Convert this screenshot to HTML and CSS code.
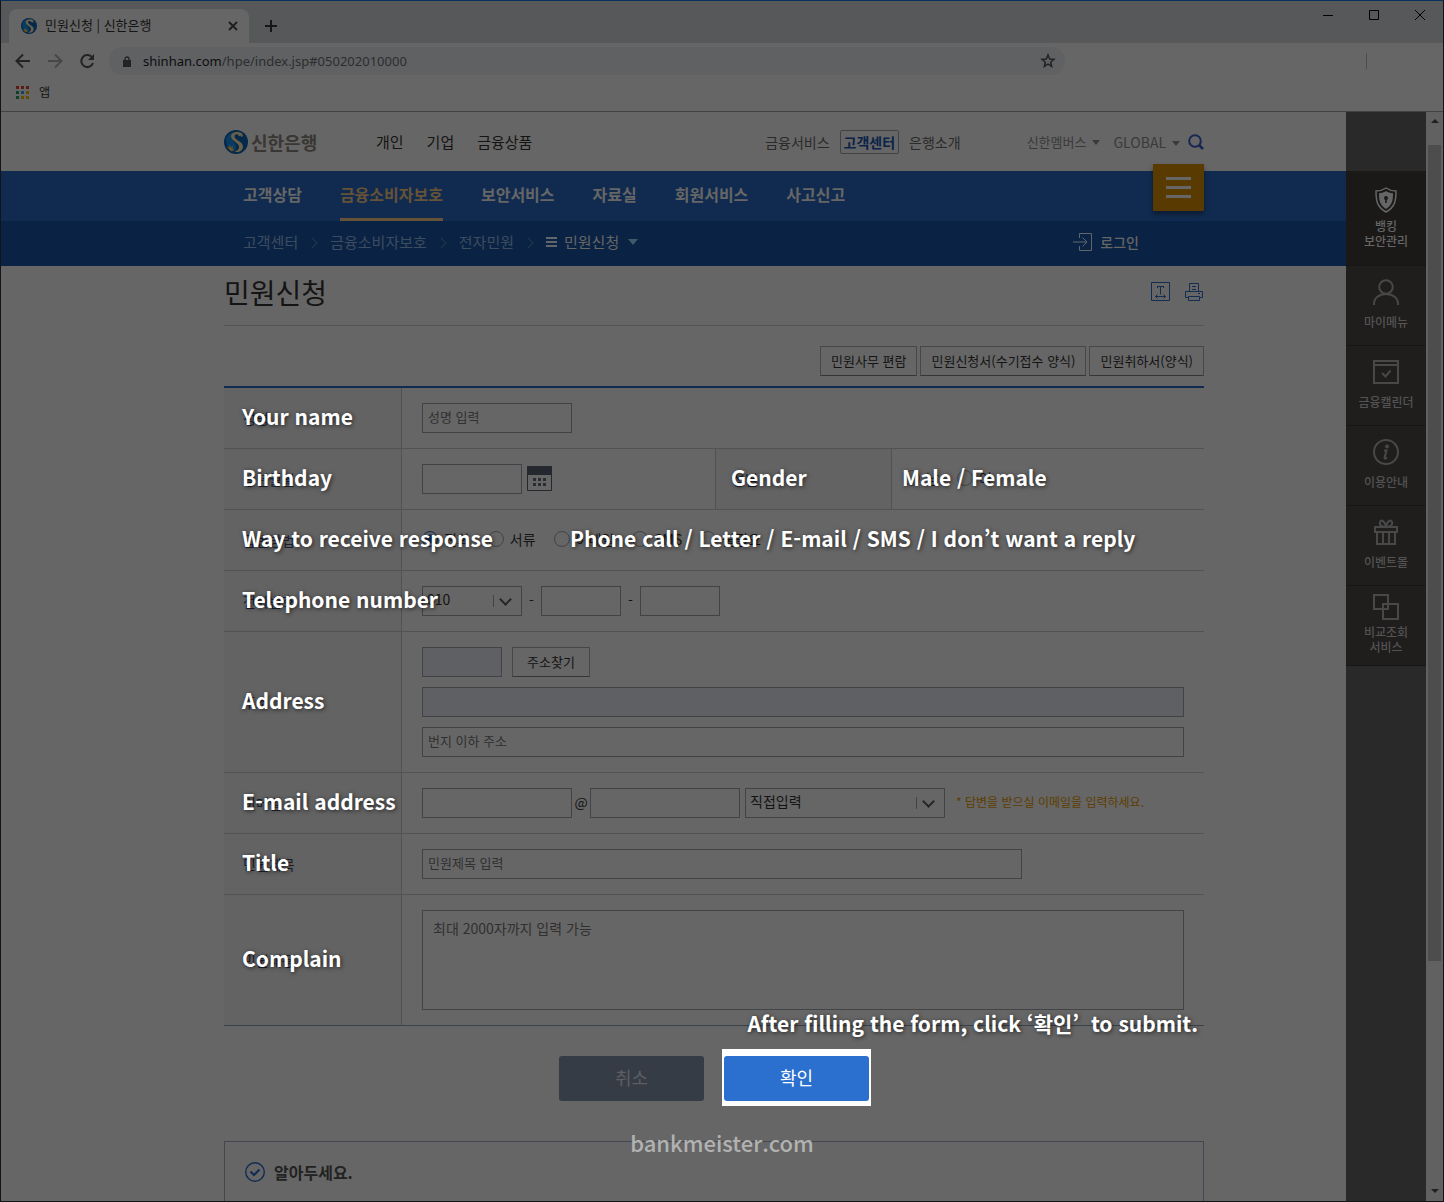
FILE: index.html
```html
<!DOCTYPE html>
<html lang="ko">
<head>
<meta charset="utf-8">
<title>민원신청 | 신한은행</title>
<meta name="viewport" content="width=device-width, initial-scale=1">
<link rel="stylesheet" href="styles.css">
</head>
<body>
<svg class="defs" aria-hidden="true">
  <symbol id="logo" viewBox="0 0 24 24">
    <circle cx="12" cy="12" r="12" fill="#05294a"/>
    <path d="M2 9a10 10 0 0 1 8-7c-3 3-4 6-1 9 3 3 4 6 2 10-5-1-9-5-9-12z" fill="#083c63"/>
    <path d="M18 3.500c-1-1-3-1.500-5-1.500-3.500 0-6 2-6 4.500C7 11 15 12.500 15 17c0 2.500-2 4-5 4.500 4.500 1.500 9-.5 9-5 0-5-8.500-6.500-8.500-10 0-1.800 2-2.500 3.500-2l1 2 1.500-1 1 1.500 1.500-1z" fill="#67604a"/>
    <path d="M3 16l2 1.500.5-2.500L7 17.500 9 16l-.5 3 2 .5L8 21.500C6 21 4 18.500 3 16z" fill="#6a5221"/>
  </symbol>
</svg>
<div class="window">
  <header class="chrome">
    <div class="tabs">
      <div class="tab">
        <svg class="favicon" width="16" height="16"><use href="#logo"/></svg>
        <span class="tab-title">민원신청 | 신한은행</span>
        <button class="icon-btn" aria-label="Close tab"><svg width="10" height="10" viewBox="0 0 10 10"><path d="M1 1l8 8M9 1l-8 8" stroke="#1c1d1e" stroke-width="1.800"/></svg></button>
      </div>
      <button class="icon-btn new-tab" aria-label="New tab"><svg width="12" height="12" viewBox="0 0 12 12"><path d="M6 0v12M0 6h12" stroke="#161718" stroke-width="2"/></svg></button>
      <div class="win-controls">
        <button class="icon-btn" aria-label="Minimize"><svg width="10" height="10"><path d="M0 5.5h10" stroke="#000"/></svg></button>
        <button class="icon-btn" aria-label="Maximize"><svg width="10" height="10"><path d="M.5.5h9v9h-9z" fill="none" stroke="#000"/></svg></button>
        <button class="icon-btn" aria-label="Close"><svg width="10" height="10"><path d="M0 0l10 10M10 0L0 10" stroke="#000"/></svg></button>
      </div>
    </div>
    <div class="toolbar">
      <button class="icon-btn" aria-label="Back"><svg width="16" height="16" viewBox="0 0 16 16"><path d="M15 8H2M8 1.500L1.500 8 8 14.500" fill="none" stroke="#222325" stroke-width="2"/></svg></button>
      <button class="icon-btn" aria-label="Forward"><svg width="16" height="16" viewBox="0 0 16 16"><path d="M1 8h13M8 1.500L14.500 8 8 14.500" fill="none" stroke="#464749" stroke-width="2"/></svg></button>
      <button class="icon-btn" aria-label="Reload"><svg width="16" height="16" viewBox="0 0 16 16"><path d="M14 10a6 6 0 1 1-1.500-6.200" fill="none" stroke="#222325" stroke-width="2"/><path d="M15 1v6H9z" fill="#222325"/></svg></button>
      <div class="omnibox">
        <svg width="8" height="11" viewBox="0 0 8 11"><path d="M0 4h8v7H0z" fill="#222325"/><path d="M2 5V3a2 2 0 0 1 4 0v2" fill="none" stroke="#222325" stroke-width="1.300"/></svg>
        <span class="url"><b>shinhan.com</b>/hpe/index.jsp#050202010000</span>
        <svg width="16" height="16" viewBox="0 0 16 16"><path d="M8 2l1.700 4 4.300.4-3.300 2.800 1 4.300L8 11.200l-3.700 2.300 1-4.300L2 6.400 6.300 6z" fill="none" stroke="#222325" stroke-width="1.500"/></svg>
      </div>
      <span class="tool-divider"></span>
    </div>
    <div class="bookmarks">
      <svg width="13" height="13" viewBox="0 0 13 13"><path d="M0 0h3v3H0zM5 0h3v3H5zM10 0h3v3h-3z" fill="#5e1b16"/><path d="M0 5h3v3H0zM0 10h3v3H0z" fill="#0c4225"/><path d="M5 5h3v3H5z" fill="#1b3f6b"/><path d="M10 5h3v3h-3zM5 10h3v3H5zM10 10h3v3h-3z" fill="#644b02"/></svg>
      <a href="#apps">앱</a>
    </div>
  </header>

  <div class="viewport">
    <main class="page">
      <div class="band top">
        <div class="inner">
          <a class="brand" href="#home"><svg width="24" height="24"><use href="#logo"/></svg>신한은행</a>
          <nav class="main-links"><a href="#personal">개인</a><a href="#corp">기업</a><a href="#products">금융상품</a></nav>
          <nav class="sub-links"><a href="#service">금융서비스</a><a class="boxed" href="#center">고객센터</a><a href="#about">은행소개</a></nav>
          <div class="util">
            <a href="#members">신한멤버스<i class="caret"></i></a>
            <a class="global" href="#global">GLOBAL<i class="caret"></i></a>
            <button class="icon-btn" aria-label="검색"><svg width="16" height="16" viewBox="0 0 16 16"><circle cx="7" cy="7" r="5.800" fill="none" stroke="#182653" stroke-width="2"/><path d="M11 11l4 4" stroke="#182653" stroke-width="2.500"/></svg></button>
          </div>
        </div>
      </div>
      <div class="band gnb">
        <div class="inner">
          <a href="#1">고객상담</a><a class="on" href="#2">금융소비자보호</a><a href="#3">보안서비스</a><a href="#4">자료실</a><a href="#5">회원서비스</a><a href="#6">사고신고</a>
          <button class="menu-all" aria-label="전체메뉴"><span></span><span></span><span></span></button>
        </div>
      </div>
      <div class="band crumbs">
        <div class="inner">
          <a href="#c1">고객센터</a><i class="sep"></i><a href="#c2">금융소비자보호</a><i class="sep"></i><a href="#c3">전자민원</a><i class="sep"></i>
          <a class="here" href="#c4"><svg width="11" height="10" viewBox="0 0 11 10"><path d="M0 1h11M0 5h11M0 9h11" stroke="#61666b" stroke-width="2"/></svg>민원신청<i class="caret"></i></a>
          <a class="login" href="#login"><svg width="20" height="18" viewBox="0 0 20 18"><path d="M6.500 5V.500h12v17h-12V13M0 9h14M9.500 4.500L14 9l-4.500 4.500" fill="none" stroke="#61666b"/></svg>로그인</a>
        </div>
      </div>

      <div class="band">
        <form class="inner body">
          <div class="title-row">
            <h1>민원신청</h1>
            <button type="button" class="icon-btn" aria-label="글자 크기"><svg width="19" height="19" viewBox="0 0 19 19"><path d="M.500.500h18v18H.500zM6 4.500h7M9.500 4.500v8M6.500 4v2M12.500 4v2M4.500 14.500h10M6.500 12.500l-2 2 2 2M12.500 12.500l2 2-2 2" fill="none" stroke="#122c52"/></svg></button>
            <button type="button" class="icon-btn" aria-label="인쇄"><svg width="18" height="18" viewBox="0 0 18 18"><path d="M4.500 8.500v-8h9v8M3.500 14.500h-3v-6h17v6h-3M3.500 13.500h11v4h-11zM7 3.500h4M7 6.500h4M13 10.500h2" fill="none" stroke="#122c52"/></svg></button>
          </div>
          <div class="downloads">
            <button type="button" class="btn">민원사무 편람</button><button type="button" class="btn">민원신청서(수기접수 양식)</button><button type="button" class="btn">민원취하서(양식)</button>
          </div>

          <table class="form">
            <colgroup><col class="c1"><col class="c2"><col class="c3"><col></colgroup>
            <tr>
              <th scope="row"><label for="name">성명</label><span class="note">Your name</span></th>
              <td colspan="3"><input class="w150" id="name" placeholder="성명 입력"></td>
            </tr>
            <tr>
              <th scope="row"><label for="birth">생년월일</label><span class="note">Birthday</span></th>
              <td><div class="line"><input class="w100" id="birth"><button type="button" class="icon-btn cal" aria-label="달력"><svg width="25" height="25" viewBox="0 0 25 25"><path d="M.500.500h24v24H.500z" fill="#666" stroke="#25292f"/><path d="M0 0h25v9H0z" fill="#25292f"/><path d="M6 12h3v3H6zM11 12h3v3h-3zM16 12h3v3h-3zM6 17h3v3H6zM11 17h3v3h-3zM16 17h3v3h-3z" fill="#292d33"/></svg></button></div></td>
              <th scope="row" class="mid">성별<span class="note near">Gender</span></th>
              <td class="tight"><div class="line radios"><label><input type="radio" name="sex">남</label><label><input type="radio" name="sex">여</label></div><span class="note near">Male / Female</span></td>
            </tr>
            <tr>
              <th scope="row">답변방법<span class="note">Way to receive response</span></th>
              <td colspan="3"><div class="line radios"><label><input type="radio" name="reply" checked>전화</label><label><input type="radio" name="reply">서류</label><label><input type="radio" name="reply">이메일</label><label><input type="radio" name="reply">SMS</label><label><input type="radio" name="reply">불필요</label></div><span class="note options">Phone call / Letter / E-mail / SMS / I don’t want a reply</span></td>
            </tr>
            <tr>
              <th scope="row"><label for="tel">전화번호</label><span class="note">Telephone number</span></th>
              <td colspan="3"><div class="line phone"><span class="select w100"><select id="tel"><option>010</option></select></span><span class="dash">-</span><input class="w80" aria-label="전화번호 중간"><span class="dash">-</span><input class="w80" aria-label="전화번호 끝"></div></td>
            </tr>
            <tr>
              <th scope="row"><label for="addr">주소</label><span class="note">Address</span></th>
              <td colspan="3"><div class="stack">
                <div class="line zip"><input class="w80" aria-label="우편번호" readonly><button type="button" class="btn find">주소찾기</button></div>
                <input aria-label="기본 주소" readonly>
                <input id="addr" placeholder="번지 이하 주소">
              </div></td>
            </tr>
            <tr>
              <th scope="row"><label for="mail">이메일</label><span class="note">E-mail address</span></th>
              <td colspan="3"><div class="line mail"><input class="w150" id="mail"><span class="at">@</span><input class="w150" aria-label="이메일 도메인"><span class="select w200"><select aria-label="도메인 선택"><option>직접입력</option></select></span><span class="hint">* 답변을 받으실 이메일을 입력하세요.</span></div></td>
            </tr>
            <tr>
              <th scope="row"><label for="subject">민원제목</label><span class="note">Title</span></th>
              <td colspan="3"><input class="w600" id="subject" placeholder="민원제목 입력"></td>
            </tr>
            <tr>
              <th scope="row"><label for="content">민원내용</label><span class="note">Complain</span></th>
              <td colspan="3"><textarea id="content" placeholder="최대 2000자까지 입력 가능"></textarea></td>
            </tr>
          </table>

          <div class="actions">
            <button type="button" class="cta">취소</button>
            <div class="spot"><button type="submit" class="cta ok">확인</button></div>
            <span class="note submit-note">After filling the form, click ‘확인’&nbsp; to submit.</span>
          </div>

          <section class="info">
            <h2><svg width="20" height="20" viewBox="0 0 20 20"><circle cx="10" cy="10" r="9.300" fill="none" stroke="#122c52" stroke-width="1.400"/><path d="M5.500 9.500l3.500 3.500 5.500-5.500" fill="none" stroke="#122c52" stroke-width="2.200"/></svg>알아두세요.</h2>
            <span class="watermark">bankmeister.com</span>
          </section>
        </form>
      </div>
    </main>

    <aside class="rail">
      <a class="first" href="#r1"><svg width="24" height="26" viewBox="0 0 24 26"><path d="M12 1c3 2 6 3 10 3 0 10-1 16-10 21C3 20 2 14 2 4c4 0 7-1 10-3z" fill="none" stroke="#666" stroke-width="1.500"/><path d="M12 4c2 1.500 4 2 7 2.300 0 8-1 11.700-7 15.700-6-4-7-7.700-7-15.700C8 6 10 5.500 12 4z" fill="#666" stroke="none"/><circle cx="12" cy="11" r="2" fill="#1a1918" stroke="none"/><path d="M11.200 12h1.600v4h-1.600z" fill="#1a1918" stroke="none"/></svg>뱅킹<br>보안관리</a>
      <a href="#r2"><svg width="26" height="26" viewBox="0 0 26 26"><circle cx="13" cy="8" r="6.800"/><path d="M1 26v-1c0-6 5-10 12-10s12 4 12 10v1"/></svg>마이메뉴</a>
      <a href="#r3"><svg width="26" height="26" viewBox="0 0 26 26"><path d="M1 2h24v22H1zM1 6h24M9 14l3.500 3.500 5-6"/></svg>금융캘린더</a>
      <a href="#r4"><svg width="26" height="26" viewBox="0 0 26 26"><circle cx="13" cy="13" r="12"/><circle cx="14" cy="7.500" r="1"/><path d="M11 11.500h2.500L11.500 19c0 1 1.500.5 2.500-.5"/></svg>이용안내</a>
      <a href="#r5"><svg width="26" height="26" viewBox="0 0 26 26"><path d="M2 8h22v5H2zM4 13v12h18V13M10 13v12M16 13v12M13 8C9 8 6 6 7 3s5-1 6 5c1-6 5-8 6-5s-2 5-6 5z"/></svg>이벤트몰</a>
      <a class="two" href="#r6"><svg width="26" height="26" viewBox="0 0 26 26"><path d="M1 1h14v14H1zM10 10h15v15H10z"/></svg>비교조회<br>서비스</a>
    </aside>
    <div class="scrollbar"><i class="up"></i><span class="thumb"></span><i class="down"></i></div>
  </div>
</div>
</body>
</html>
```
FILE: styles.css
```css
:root {
  --paper: #666;
  --ink: #141414;
  --blue: #112b50;
  --edge: #414346;
  --rule: #515253;
}

* { box-sizing: border-box; }

body {
  margin: 0;
  background: var(--paper);
  color: var(--ink);
  font: 14px/20px "Noto Sans CJK KR", "Noto Sans", sans-serif;
}

a { color: inherit; text-decoration: none; }
button, input, select, textarea { font: inherit; color: inherit; margin: 0; }
.defs { position: absolute; width: 0; height: 0; }
svg { display: block; flex: none; }

.icon-btn {
  display: flex;
  padding: 0;
  border: 0;
  background: none;
}

.window {
  display: flex;
  flex-direction: column;
  height: 100vh;
  border: 1px solid #121416;
  border-top-color: #07305a;
  overflow: hidden;
}

/* browser frame */
.chrome { flex: none; border-bottom: 1px solid #424345; }

.tabs {
  display: flex;
  height: 42px;
  padding: 8px 0 0 8px;
  background: #56585a;
}

.tab {
  display: flex;
  align-items: center;
  width: 240px;
  padding: 0 11px 0 12px;
  border-radius: 8px 8px 0 0;
  background: var(--paper);
  font-size: 13px;
}
.tab-title { flex: 1; margin-left: 8px; padding-bottom: 2px; }
.new-tab { align-items: center; margin-left: 16px; }

.win-controls { display: flex; gap: 36px; margin-left: auto; padding: 1px 18px; }

.toolbar {
  display: flex;
  align-items: center;
  gap: 16px;
  height: 36px;
  padding: 0 14px;
}

.omnibox {
  display: flex;
  align-items: center;
  flex: 0 1 956px;
  height: 28px;
  margin-left: -2px;
  padding: 0 9px 0 14px;
  border-radius: 14px;
  background: #606163;
  color: #2c2d2f;
  font-family: "Noto Sans", sans-serif;
}
.url { flex: 1; margin-left: 12px; font-size: 13px; }
.url b { color: #0d0e0f; font-weight: 400; }
.tool-divider { width: 1px; height: 16px; margin: 0 62px 0 auto; background: #4b4d50; }

.bookmarks {
  display: flex;
  align-items: center;
  gap: 10px;
  height: 32px;
  padding: 0 15px 6px;
  font-size: 12px;
}

.viewport { display: flex; flex: 1; min-height: 0; }
.page { flex: 1; min-width: 0; overflow: hidden; }

/* the left padding balances the quick rail on the right */
.band { padding-left: 81px; }
.inner { position: relative; max-width: 980px; margin: 0 auto; }

.top .inner { display: flex; align-items: center; height: 59px; }
.brand {
  display: flex;
  align-items: center;
  gap: 3px;
  width: 152px;
  color: #393634;
  font-size: 18px;
  font-weight: 700;
}
.main-links { display: flex; gap: 23px; font-size: 15px; }
.sub-links { display: flex; align-items: center; gap: 10px; margin-left: auto; color: #2a2a2a; }
.boxed {
  padding: 1px 3px;
  border: 1px solid var(--edge);
  border-radius: 2px;
  color: #0b2348;
  font-weight: 700;
}
.util {
  display: flex;
  align-items: center;
  gap: 13px;
  margin-left: 66px;
  color: #3a3a3a;
  font-size: 13px;
}
.global { font-size: 14px; }
.util .icon-btn { margin-left: -5px; }
.caret {
  display: inline-block;
  margin-left: 6px;
  border: 4px solid transparent;
  border-top: 5px solid currentColor;
  border-bottom: 0;
  vertical-align: 2px;
}

.gnb { background: var(--blue); color: #666; }
.gnb .inner {
  display: flex;
  gap: 38px;
  height: 50px;
  padding-left: 19px;
  font-size: 16px;
  font-weight: 700;
  line-height: 47px;
}
.gnb .on { color: #665237; border-bottom: 3px solid #665237; }
.menu-all {
  position: absolute;
  right: 0;
  top: -7px;
  display: flex;
  flex-direction: column;
  align-items: center;
  justify-content: center;
  gap: 6px;
  width: 51px;
  height: 47px;
  border: 0;
  background: #593a00;
  box-shadow: 0 3px 5px #0006;
}
.menu-all span { width: 25px; height: 3px; background: #666; }

.crumbs { background: #0a2344; color: #3d4c60; }
.crumbs .inner { display: flex; align-items: center; height: 45px; padding: 0 0 3px 19px; font-size: 15px; }
.sep {
  width: 8px;
  height: 8px;
  margin: 2px 14px 0 10px;
  border: solid #24364f;
  border-width: 1px 1px 0 0;
  transform: rotate(45deg);
}
.here, .login { display: flex; align-items: center; color: #666; }
.here svg { margin-right: 7px; }
.here .caret { border-width: 6px 5px 0; border-top-color: #3f5a6a; margin-left: 9px; }
.login { gap: 7px; margin: 0 65px 0 auto; font-size: 14px; font-weight: 500; }

.title-row {
  display: flex;
  align-items: center;
  gap: 15px;
  height: 60px;
  padding: 0 1px 8px 0;
  border-bottom: 1px solid #545454;
}
h1 { flex: 1; margin: 0; font-size: 28px; font-weight: 400; line-height: 40px; }

.downloads { display: flex; justify-content: flex-end; gap: 3px; padding: 20px 0 10px; }
.btn {
  height: 30px;
  padding: 0 10px;
  border: 1px solid #464749;
  border-bottom-color: #333538;
  border-radius: 1px;
  background: none;
  font-size: 13px;
  line-height: 26px;
  white-space: nowrap;
}

/* complaint form */
.form { width: 100%; border-collapse: separate; border-spacing: 0; border-top: 2px solid var(--blue); border-bottom: 1px solid #3b414a; table-layout: fixed; }
.c1 { width: 178px; }
.c2 { width: 313px; }
.c3 { width: 177px; }
.form th, .form td { position: relative; height: 61px; padding: 15px 20px; border-bottom: 1px solid var(--rule); text-align: left; }
.form th { padding: 0 19px; border-right: 1px solid var(--rule); background: #636364; color: #1a2030; font-weight: 400; }
.form tr:last-child > * { border-bottom: 0; }
.form .mid { padding-left: 16px; border-left: 1px solid var(--rule); }
.form .tight { padding-left: 12px; }

input, textarea {
  display: block;
  width: 100%;
  height: 30px;
  padding: 0 5px 4px;
  border: 1px solid var(--edge);
  border-radius: 0;
  background: none;
}
input, textarea, select, .btn { outline: 0; }
::placeholder { color: #303030; opacity: 1; }
input { font-size: 13px; }
input[readonly] { background: #5e6063; }
textarea { height: 100px; padding: 7px 10px; resize: none; }
.w80 { width: 80px; }
.w100 { width: 100px; }
.w150 { width: 150px; }
.w200 { width: 200px; }
.w600 { width: 600px; }

.line { display: flex; align-items: center; height: 30px; }
.stack { display: grid; gap: 10px; }
.cal { margin-left: 5px; padding-bottom: 2px; }
.zip { gap: 10px; }
.find { padding: 0 14px; }
.dash { width: 19px; padding-bottom: 3px; text-align: center; }
.at { width: 18px; padding-bottom: 3px; text-align: center; }
.hint { margin-left: 11px; padding-bottom: 2px; color: #5e3d00; font-size: 12px; white-space: nowrap; }

.select { position: relative; display: block; }
.mail .select { margin-left: 5px; }
.select select {
  appearance: none;
  width: 100%;
  height: 30px;
  padding: 0 4px 4px;
  border: 1px solid var(--edge);
  border-radius: 0;
  background: none;
  color: var(--ink);
}
.select::before { content: ""; position: absolute; right: 28px; top: 9px; height: 12px; border-left: 1px solid var(--edge); }
.select::after {
  content: "";
  position: absolute;
  right: 12px;
  top: 9px;
  width: 7px;
  height: 7px;
  border: solid #262626;
  border-width: 0 2px 2px 0;
  transform: rotate(45deg);
}

.radios { gap: 18px; }
.radios label { display: flex; align-items: center; gap: 6px; padding-bottom: 3px; }
input[type="radio"] { appearance: none; width: 16px; height: 16px; padding: 0; border-radius: 50%; }
input[type="radio"]:checked { border-color: var(--blue); background: radial-gradient(var(--blue) 4px, transparent 5px); }

/* translated captions laid over the form */
.note {
  position: absolute;
  z-index: 1;
  left: 18px;
  top: 50%;
  margin-top: -20px;
  color: #fff;
  font-size: 21px;
  font-weight: 700;
  line-height: 36px;
  white-space: nowrap;
  text-shadow: 1px 1px 4px #000a;
  pointer-events: none;
}
.near { left: 10px; }
.mid .near { left: 15px; }
.options { left: 168px; }

.actions { position: relative; display: flex; justify-content: center; align-items: baseline; gap: 18px; height: 57px; margin-top: 23px; padding-left: 2px; }
.cta {
  width: 145px;
  height: 45px;
  padding: 0 0 3px;
  border: 0;
  border-radius: 3px;
  background: #363c45;
  color: #5c5f63;
  font-size: 18px;
}
.spot { padding: 7px 2px 5px; background: #fff; }
.ok { display: block; background: #2b70cf; color: #fff; }
.submit-note { left: auto; right: 6px; top: -25px; margin: -19px 0 0; }

.info { position: relative; height: 140px; margin-top: 35px; padding: 20px; border: 1px solid #44474f; }
h2 { display: flex; align-items: center; gap: 9px; margin: 0; color: #222; font-size: 16px; font-weight: 700; line-height: 20px; }
.watermark {
  position: absolute;
  left: 0;
  right: 0;
  top: -18px;
  padding-left: 16px;
  color: #b2b2b2;
  font-size: 22px;
  font-weight: 500;
  line-height: 36px;
  text-align: center;
}

/* quick menu */
.rail { width: 80px; flex: none; padding-top: 59px; background: #292929; color: #535353; }
.rail a {
  display: flex;
  flex-direction: column;
  align-items: center;
  height: 80px;
  padding-top: 13px;
  border-bottom: 1px solid #161616;
  background: #1f1e1d;
  font-size: 12px;
  font-weight: 500;
  line-height: 15px;
  text-align: center;
}
.rail svg { margin-bottom: 9px; fill: none; stroke: #484848; stroke-width: 2; }
.rail .first { height: 95px; padding-top: 16px; background: #1a1918; color: #666; }
.rail .first svg { margin-bottom: 5px; }
.rail .two { padding-top: 8px; }
.rail .two svg { margin-bottom: 4px; }

.scrollbar { display: flex; flex-direction: column; align-items: center; flex: none; width: 17px; padding: 7px 0 8px; background: #616161; }
.up, .down { border: 4px solid transparent; }
.up { border-top: 0; border-bottom-color: #202020; }
.down { border-bottom: 0; border-top-color: #202020; margin-top: auto; }
.thumb { width: 13px; height: 76%; margin-top: 22px; background: #4d4d4d; }
```
